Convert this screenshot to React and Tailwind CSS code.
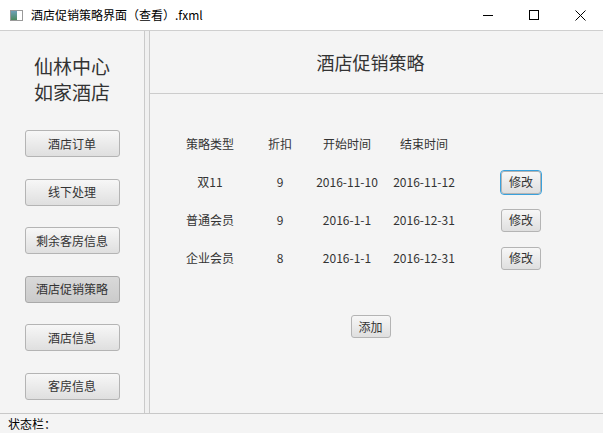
const FONT = { fontFamily: '"Microsoft YaHei", "Noto Sans CJK SC", "Noto Sans", sans-serif' };

const NAV = ["酒店订单", "线下处理", "剩余客房信息", "酒店促销策略", "酒店信息", "客房信息"];

const ROWS = [
  { type: "双11", discount: "9", start: "2016-11-10", end: "2016-11-12", focused: true },
  { type: "普通会员", discount: "9", start: "2016-1-1", end: "2016-12-31" },
  { type: "企业会员", discount: "8", start: "2016-1-1", end: "2016-12-31" },
];

function FxButton({ children, className = "", active, focused }) {
  const base = active
    ? "bg-gradient-to-b from-[#d9d9d9] to-[#cbcbcb] border-[#a9a9a9]"
    : "bg-gradient-to-b from-[#f7f7f7] to-[#dfdfdf] border-[#b4b4b4]";
  return (
    <button
      className={`flex items-center justify-center rounded-[3px] border text-[12px] text-[#333] ${base} ${
        focused ? "outline outline-1 outline-[#3aa1dc] border-[#3aa1dc]" : ""
      } ${className}`}
    >
      {children}
    </button>
  );
}

function TitleBar() {
  return (
    <div className="flex h-[31px] items-center bg-white border-b border-[#cfcfcf]">
      <div className="ml-[10px] flex h-[11px] w-[13px] border border-[#9a9a9a] bg-white">
        <div className="w-[6px] bg-gradient-to-b from-[#6fa0b8] to-[#4d8a5e]" />
      </div>
      <span className="ml-[8px] text-[12px] text-black">酒店促销策略界面（查看）.fxml</span>
      <div className="ml-auto flex h-full items-center">
        <div className="flex w-[46px] justify-center">
          <div className="h-px w-[10px] bg-black" />
        </div>
        <div className="flex w-[46px] justify-center">
          <div className="h-[10px] w-[10px] border border-black" />
        </div>
        <div className="flex w-[46px] justify-center">
          <svg width="11" height="11" viewBox="0 0 11 11">
            <path d="M0.5 0.5 L10.5 10.5 M10.5 0.5 L0.5 10.5" stroke="#000" strokeWidth="1" />
          </svg>
        </div>
      </div>
    </div>
  );
}

export default function App() {
  return (
    <div className="flex h-[433px] w-[603px] flex-col bg-[#f4f4f4] text-[#333]" style={FONT}>
      <TitleBar />
      <div className="flex flex-1">
        {/* sidebar */}
        <div className="flex w-[144px] flex-col items-center">
          <div className="mt-[22px] text-center text-[19px] leading-[26px] text-[#333]">
            <div>仙林中心</div>
            <div>如家酒店</div>
          </div>
          <div className="mt-[25px] flex flex-col gap-[21.5px]">
            {NAV.map((n, i) => (
              <FxButton key={n} active={i === 3} className="h-[27px] w-[95px]">
                {n}
              </FxButton>
            ))}
          </div>
        </div>
        {/* divider */}
        <div className="flex w-[6px] border-l border-r border-[#cacaca] bg-[#f0f0f0]" />
        {/* content */}
        <div className="flex flex-1 flex-col">
          <div className="flex h-[62px] items-center justify-center pr-[12px] text-[18px] text-[#333]">
            酒店促销策略
          </div>
          <div className="h-px bg-[#cccccc]" />
          <div className="mt-[31px] ml-[20px] grid grid-cols-[80px_60px_74px_80px_114px] text-[12px]">
            {["策略类型", "折扣", "开始时间", "结束时间", ""].map((h, i) => (
              <div key={i} className="flex h-[38px] items-center justify-center">
                {h}
              </div>
            ))}
            {ROWS.map((r, i) => (
              <div key={i} className="contents">
                <div className="flex h-[38px] items-center justify-center">{r.type}</div>
                <div className="flex h-[38px] items-center justify-center">{r.discount}</div>
                <div className="flex h-[38px] items-center justify-center">{r.start}</div>
                <div className="flex h-[38px] items-center justify-center">{r.end}</div>
                <div className="flex h-[38px] items-center justify-center">
                  <FxButton focused={r.focused} className="h-[23px] w-[40px]">
                    修改
                  </FxButton>
                </div>
              </div>
            ))}
          </div>
          <div className="mt-[38px] flex justify-center pr-[12px]">
            <FxButton className="h-[23px] w-[40px]">添加</FxButton>
          </div>
        </div>
      </div>
      <div className="flex h-[20px] items-center border-t border-[#c8c8c8] pl-[8px] text-[12px] text-black">
        状态栏：
      </div>
    </div>
  );
}
